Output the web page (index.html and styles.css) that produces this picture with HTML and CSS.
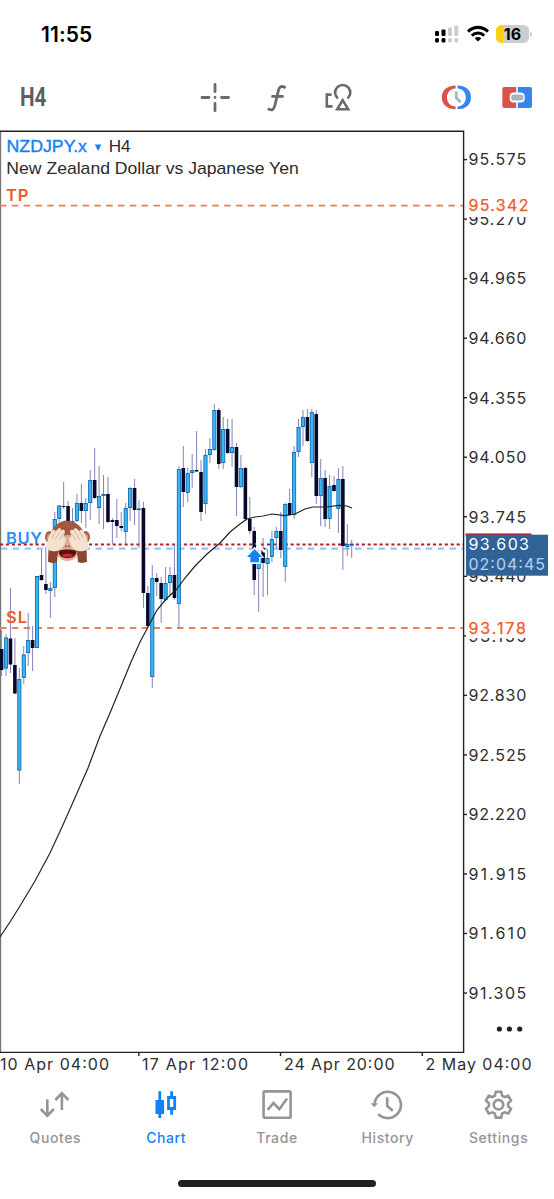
FILE: index.html
```
<!DOCTYPE html>
<html lang="en">
<head>
  <meta charset="UTF-8">
  <title>NZDJPY.x H4</title>
  <meta name="viewport" content="width=device-width, initial-scale=1.0">
  <link rel="stylesheet" href="styles.css">
</head>
<body>
  <header class="status-bar">
    <span class="clock">11:55</span>
    <div class="status-icons">
      <svg class="signal" width="24" height="18" viewBox="0 0 24 18">
        <g fill="#000">
          <rect x="0" y="6" width="4" height="5" rx="1"/>
          <rect x="6.5" y="4.5" width="4" height="6.5" rx="1"/>
          <rect x="0" y="13" width="4" height="4.5" rx="1.5"/>
          <rect x="6.5" y="13" width="4" height="4.5" rx="1.5"/>
        </g>
        <g fill="#ccc">
          <rect x="13" y="2.5" width="4" height="8.5" rx="1"/>
          <rect x="19.3" y="0.5" width="4" height="10.5" rx="1"/>
          <rect x="13" y="13" width="4" height="4.5" rx="1.5"/>
          <rect x="19.3" y="13" width="4" height="4.5" rx="1.5"/>
        </g>
      </svg>
      <svg class="wifi" width="22" height="18" viewBox="0 0 22 18">
        <g fill="none" stroke="#000" stroke-width="3.1">
          <path d="M1 6.6C6.8 1 15.2 1 21 6.6"/>
          <path d="M4.8 10.6C8.4 7.2 13.6 7.2 17.2 10.6"/>
        </g>
        <path d="M7.6 13.2C9.6 11.5 12.4 11.5 14.4 13.2L11 16.6Z"/>
      </svg>
      <div class="battery"><span>16</span></div>
    </div>
  </header>

  <div class="toolbar">
    <svg class="timeframe" width="30" height="32" viewBox="0 0 30 32">
      <text x="0" y="24.6" textLength="26.5" lengthAdjust="spacingAndGlyphs">H4</text>
    </svg>
    <div class="tools">
      <svg width="32" height="32" viewBox="0 0 32 32" class="line-icon">
        <path d="M16 3.5V10.7M16 22.5V29.7M3 16.5H10M22.5 16.5H29.5M16 16.5h0.01"/>
      </svg>
      <svg width="32" height="32" viewBox="0 0 32 32" class="line-icon">
        <path d="M23.7 6.3C20.5 4.6 18.3 5.6 17.4 9.5L14 24C13 28.2 11.3 29.8 7.8 28.3M11.5 15.4H21.5"/>
      </svg>
      <svg width="32" height="32" viewBox="0 0 32 32" class="line-icon square">
        <path d="M8.6 13.6H3.8V25.4H9.6"/>
        <path d="M14.8 17.4A7.6 7.6 0 1 1 24.6 17.4"/>
        <path d="M19.7 19.2L14.2 28.3H25.2Z"/>
      </svg>
    </div>
    <div class="trade-tools">
      <svg width="32" height="32" viewBox="0 0 32 32">
        <path fill="#d9544b" d="M15.6 4.6C7 4.6 1.8 9.6 1.8 16.4S7 28.2 15.6 28.2V25.4C10.4 25.2 7 21.4 7 16.4S10.4 7.6 15.6 7.4Z"/>
        <path fill="#3485f0" d="M17.6 4.6C26 4.6 31 9.6 31 16.4S26 28.2 17.6 28.2V25.4C22.4 25.2 25.8 21.4 25.8 16.4S22.4 7.6 17.6 7.4Z"/>
        <path fill="none" stroke="#a5b5bf" stroke-width="2.8" d="M16.3 10.6V17L20.6 21.3"/>
      </svg>
      <svg width="32" height="32" viewBox="0 0 32 32">
        <path fill="#d9544b" d="M15.2 6H3.3Q1.3 6 1.3 8V25Q1.3 27 3.3 27H15.2Z"/>
        <path fill="#3485f0" d="M16.8 6H29Q31 6 31 8V25Q31 27 29 27H16.8Z"/>
        <rect x="8.7" y="11.4" width="15" height="10" rx="4" fill="#fff"/>
        <rect x="10.2" y="13.4" width="12.2" height="6.1" rx="2.8" fill="#a5b5bf"/>
      </svg>
    </div>
  </div>

  <!-- chart, user units are screen pixels -->
  <svg class="chart" width="554" height="948" viewBox="0 130 554 948">
    <path d="M0.5 131V1052" stroke="#777" stroke-width="1.4"/>
    <path d="M0 131.2H463.6V1052.4H0" fill="none" stroke="#222" stroke-width="1.4"/>

    <g class="levels">
      <path d="M0 205.6H463" stroke="#f37a52" stroke-width="1.6" stroke-dasharray="6.5 5.3"/>
      <path d="M0 628H463" stroke="#ed7f5d" stroke-width="1.8" stroke-dasharray="6.5 5.3"/>
      <path d="M0 544.4H463" stroke="#b3202e" stroke-width="2" stroke-dasharray="3.2 2.73"/>
      <path d="M1 548.7H463" stroke="#93c6f7" stroke-width="2.3" stroke-dasharray="6.5 5.3"/>
    </g>

    <g id="candles"></g>
    <polyline class="ma" points="0,937 10,922 20,906 35,881 50,853 62,827 74,800 88,768 100,736 110,713 122,684 131,662 140,642 148,627 157,610 167,598 176,590 185,578 195,566 207,554 220,543 230,532 240,524 247,519 255,517 263,516 272,514 285,515.6 295,514 305,509 313,507 327,507 338,505.4 347,506 352,508"/>

    <!-- entry marker -->
    <path d="M256 543L265 552" stroke="#fff" stroke-width="2.5"/>
    <path d="M254.6 546.8L264.4 557.8H260.4V564H248.8V557.8H244.8Z" fill="#fff"/>
    <path d="M254.6 549L262.2 556.9H259V562.2H250.4V556.9H247Z" fill="#1482f5"/>

    <g class="level-name">
      <text x="6" y="201.3" textLength="22.5" class="stop">TP</text>
      <text x="6" y="544" textLength="36" class="buy">BUY</text>
      <text x="6" y="623.3" textLength="21" class="stop">SL</text>
    </g>

    <!-- monkey -->
    <g transform="translate(45 520)">
      <ellipse cx="4.4" cy="17" rx="4.4" ry="6" fill="#a7654b"/>
      <ellipse cx="40.6" cy="17" rx="4.4" ry="6" fill="#a7654b"/>
      <ellipse cx="4.3" cy="17.5" rx="2.3" ry="3.6" fill="#d79a80"/>
      <ellipse cx="40.7" cy="17.5" rx="2.3" ry="3.6" fill="#d79a80"/>
      <path d="M20.5 0.5C31 1 39 7 39.5 18C40 30 34 38 22.5 38S5 30 5.5 18C6 8 12 3 17 1.6Z" fill="#a1593f"/>
      <ellipse cx="22.5" cy="28" rx="12" ry="13" fill="#dcae97"/>
      <path d="M13.5 31C18 29 27 29 31.5 31C31 36.5 27 38.2 22.5 38.2S14 36.5 13.5 31Z" fill="#5b1010"/>
      <path d="M16.5 35C20 33 25 33 28.5 35C26 38.3 19 38.3 16.5 35Z" fill="#c5252f"/>
      <path d="M3.6 27L13.2 30L12 42Q7 44 3 41.8Z" fill="#8b4632"/>
      <path d="M41.4 27L31.8 30L33 42Q38 44 42 41.8Z" fill="#8b4632"/>
      <path id="hand" d="M2 28C1 22 4 15 7.5 10.5C9 9 10.7 10 10.3 11.5L13.5 8.6C15.3 7.5 16.6 8.5 16 10.2L18 9.8C19.8 9.8 20.2 11.5 19.5 13.5L18.4 17.5C20.2 16.6 21.6 18.2 20.8 20.3C19 26.5 16.5 30 11 31.2Q4 32 2 28Z" fill="#f3e2cd"/>
      <use href="#hand" transform="translate(45 0) scale(-1 1)"/>
      <path d="M6.8 18.5L10.2 11.7M10.3 19.5L16 10.2M14 20L18.8 13.4M38.2 18.5L34.8 11.7M34.7 19.5L29 10.2M31 20L26.2 13.4" fill="none" stroke="#cfab94" stroke-width="0.8"/>
      <path d="M20.7 25.5L21.5 27M24.3 25.5L23.5 27" stroke="#7a3a2b" stroke-width="1.4"/>
    </g>

    <g class="title">
      <text x="6.5" y="152" textLength="80.5" lengthAdjust="spacingAndGlyphs" class="symbol">NZDJPY.x</text>
      <path d="M94.8 144.4H101.4L98.1 151Z" fill="#1482f5"/>
      <text x="108.7" y="152" textLength="22" lengthAdjust="spacingAndGlyphs">H4</text>
      <text x="6.3" y="174" textLength="292.5" lengthAdjust="spacingAndGlyphs">New Zealand Dollar vs Japanese Yen</text>
    </g>

    <g id="priceAxis" class="axis"></g>
    <rect x="466" y="196" width="88" height="21" fill="#fff"/>
    <text class="axis order" x="468.5" y="211.3" textLength="60">95.342</text>
    <rect x="466" y="618" width="88" height="20" fill="#fff"/>
    <text class="axis order" x="468.5" y="633.6" textLength="57.5">93.178</text>

    <rect x="465.5" y="533.4" width="66" height="3" fill="#c8202e"/>
    <rect x="466" y="534.7" width="82" height="41" fill="#2f6397"/>
    <text class="axis now" x="468.5" y="550.4" textLength="60.5">93.603</text>
    <text class="axis timer" x="468.5" y="569.7" textLength="76.5">02:04:45</text>

    <g fill="#222">
      <circle cx="499.4" cy="1029" r="2.6"/>
      <circle cx="509.4" cy="1029" r="2.6"/>
      <circle cx="519.7" cy="1029" r="2.6"/>
    </g>

    <path d="M138.8 1052V1056M280.5 1052V1056M422.3 1052V1056" stroke="#222" stroke-width="1.4"/>
    <g class="axis">
      <text x="0" y="1070" textLength="109">10 Apr 04:00</text>
      <text x="142" y="1070" textLength="106">17 Apr 12:00</text>
      <text x="284" y="1070" textLength="110.5">24 Apr 20:00</text>
      <text x="425.5" y="1070" textLength="106">2 May 04:00</text>
    </g>
  </svg>

  <nav class="tabs">
    <a class="tab">
      <svg width="32" height="32" viewBox="0 0 32 32"><path d="M8.3 10.3V27M1.8 20L8.3 26.8L14.8 20M22.9 21V4.2M16.4 11L22.9 4.2L29.4 11"/></svg>
      <span>Quotes</span>
    </a>
    <a class="tab active">
      <svg width="32" height="32" viewBox="0 0 32 32">
        <path class="solid" d="M8.4 2.3H11.2V11H14.1V25H11.2V29H8.4V25H5.5V11H8.4Z"/>
        <path class="solid" fill-rule="evenodd" d="M20.2 2.3H23V7H26.1V21H23V25.7H20.2V21H17.1V7H20.2ZM19.9 10V18H23.3V10Z"/>
      </svg>
      <span>Chart</span>
    </a>
    <a class="tab">
      <svg width="32" height="32" viewBox="0 0 32 32"><rect x="2.6" y="2.4" width="27" height="26.4" rx="1.5"/><path d="M6.7 20.8L12.5 14L18.3 20.2L26 9.6"/></svg>
      <span>Trade</span>
    </a>
    <a class="tab">
      <svg width="32" height="32" viewBox="0 0 32 32">
        <path d="M2.6 14.5A13.2 13.2 0 1 1 6.3 25.2M15.2 8.3V17L20.8 21.8"/>
        <path class="solid" d="M-1.5 14.3H6L2.3 18.3Z"/>
      </svg>
      <span>History</span>
    </a>
    <a class="tab">
      <svg width="32" height="32" viewBox="0 0 32 32">
        <g transform="translate(15.5 15.7)">
          <path d="M-3.6 -9L-2.7 -12.9H2.7L3.6 -9L6 -7.6L9.8 -8.8L12.5 -4.1L9.6 -1.4V1.4L12.5 4.1L9.8 8.8L6 7.6L3.6 9L2.7 12.9H-2.7L-3.6 9L-6 7.6L-9.8 8.8L-12.5 4.1L-9.6 1.4V-1.4L-12.5 -4.1L-9.8 -8.8L-6 -7.6Z"/>
          <circle r="4.8"/>
        </g>
      </svg>
      <span>Settings</span>
    </a>
  </nav>
  <div class="home-indicator"></div>

  <script>
    const svgNS = "http://www.w3.org/2000/svg";

    function add(parent, tag, attrs, text) {
      const el = document.createElementNS(svgNS, tag);
      for (let key in attrs) el.setAttribute(key, attrs[key]);
      if (text) el.textContent = text;
      parent.appendChild(el);
    }

    // direction (1 up, 0 down), high, body top, body bottom, low
    const candles = [
      [0,630,649,670,676], [1,634,637.5,668.5,676], [0,588,638.5,664.5,673], [0,638,665,693.5,694],
      [1,668,679,770.5,784], [1,646,654.5,678,684], [1,613,640,653,666], [0,626,640,648,671],
      [1,576,576,648,648], [0,550,575,580,581], [0,547,584,590,594], [1,582,588,591,618],
      [1,512,519,588,597], [1,505,505.5,519,522], [0,482,506,507,509], [0,501,506,525,530],
      [1,508,521,523,525], [1,494,503,521,522], [0,484,503,511,523], [1,498,503,511,528],
      [1,470,480,503,520], [0,448,480,498,499], [1,466,496,508,524], [1,475,494,496,529],
      [0,477,494,522,523], [0,518,520,522,544], [0,499,520,526,538], [0,512,526,528,531],
      [1,503,508,532,544], [1,487,488,508,521], [0,479,488,510,525], [1,500,508.5,510,548],
      [0,502,508,593,608], [0,586,593,626,627], [1,565,578,677,688], [0,573,578,582,596],
      [0,577,583,599,623], [1,567,583,600,601], [1,567,575,583,595], [0,544,575,598,600],
      [1,466,469,604,628], [0,446,468,492,507], [1,468,473,493,502], [1,454,470,473,488],
      [0,431,470,471.5,472], [0,460,472,512,521], [1,449,455,504,514], [1,438,449,455,463],
      [1,404,410,450,451], [0,408,410,464,469], [1,417,429,463,469], [0,419,429,453,454],
      [1,419,447,453,467], [0,443,447,487,516], [1,455,468,487,488], [0,467,468,519,521],
      [0,497,519,531,534], [0,527,531,580,595], [1,550,558,569,612], [0,538,548,563,597],
      [1,549,558,564,595], [1,531,539,557,562], [1,527,531,538,548], [0,512,531,550,558],
      [1,503,504,567,582], [0,489,503,515,516], [1,446,452,515,519], [1,419,427,452,457],
      [1,410,417,427,446], [0,409,417,441,442], [1,409,412,463,477], [0,410,414,496,504],
      [1,459,478,496,526], [0,470,478,519,527], [1,475,486,519,529], [0,476,485,491,492],
      [1,468,479,509,533], [0,466,479,546,570], [1,524,544,547,556], [1,540,544,545,558]
    ];

    const group = document.getElementById("candles");
    candles.forEach(([up, high, top, bottom, low], i) => {
      const x = 1.6 + i * 4.432;
      add(group, "line", { class: "wick", x1: x, x2: x, y1: high, y2: low });
      if (up) {
        add(group, "rect", { class: "up", x: x - 1.6, y: top + 0.4, width: 3.2, height: Math.max(bottom - top - 0.8, 0.6) });
      } else {
        add(group, "rect", { class: "down", x: x - 1.8, y: top, width: 3.6, height: bottom - top });
      }
    });

    // price grid labels
    const axis = document.getElementById("priceAxis");
    for (let i = 0; i < 15; i++) {
      const y = 159.6 + i * 59.53;
      add(axis, "path", { d: `M463.6 ${y}H467`, stroke: "#222", "stroke-width": 1.4 });
      add(axis, "text", { x: 468.5, y: y + 5.8, textLength: 57.8 }, (95.575 - i * 0.305).toFixed(3));
    }
  </script>
</body>
</html>
```
FILE: styles.css
```
body {
  margin: 0;
  width: 554px;
  height: 1199px;
  background: #fff;
  color: #222;
  font-family: Inter, "Liberation Sans", sans-serif;
  overflow: hidden;
  display: flex;
  flex-direction: column;
}
svg {
  display: block;
  flex: none;
}
.status-bar {
  height: 68px;
  box-sizing: border-box;
  padding: 0 21px 0 41px;
  display: flex;
  align-items: center;
  justify-content: space-between;
}
.clock {
  font-size: 21px;
  font-weight: 600;
  letter-spacing: 0.1px;
  color: #000;
}
.status-icons {
  display: flex;
  align-items: center;
}
.wifi {
  margin: 0 7.5px 0 8px;
}
.battery {
  position: relative;
  width: 33px;
  height: 18px;
  border-radius: 5.5px;
  background: linear-gradient(90deg, #fcd00a 7px, #cdcdcd 7px);
  color: #000;
  font-size: 16px;
  font-weight: 700;
  line-height: 18px;
  text-align: center;
  margin-right: 4px;
}
.battery::after {
  content: "";
  position: absolute;
  left: 34px;
  top: 6.5px;
  width: 2px;
  height: 5px;
  border-radius: 0 2px 2px 0;
  background: #ccc;
}
.toolbar {
  height: 62px;
  box-sizing: border-box;
  padding: 13px 21px 0 20px;
  display: flex;
  align-items: flex-start;
}
.timeframe text {
  font-family: Roboto, sans-serif;
  font-size: 25px;
  font-weight: 700;
  fill: #5f5f5f;
}
.tools {
  display: flex;
  gap: 30px;
  margin-left: 149px;
}
.line-icon {
  fill: none;
  stroke: #6a6a6a;
  stroke-width: 2.8;
  stroke-linecap: round;
}
.line-icon.square {
  stroke-linecap: butt;
  stroke-width: 2.6;
}
.trade-tools {
  display: flex;
  gap: 29px;
  margin-left: auto;
}
.wick {
  stroke: #7773b6;
  stroke-width: 0.9;
}
.up {
  fill: #35b8f8;
  stroke: #0a5fa8;
  stroke-width: 0.8;
}
.down {
  fill: #050a2c;
}
.ma {
  fill: none;
  stroke: #222;
  stroke-width: 1.2;
}
.level-name {
  font-size: 16.5px;
  font-weight: 600;
}
.level-name .stop {
  fill: #ee5a2b;
}
.level-name .buy {
  fill: #2a8df2;
}
.title {
  font-family: "Liberation Sans", sans-serif;
  font-size: 17px;
  fill: #2b2b2b;
}
.title .symbol {
  fill: #1482f5;
  stroke: #1482f5;
  stroke-width: 0.4;
}
.axis {
  font-size: 16px;
  fill: #2e2e2e;
}
.axis.order {
  fill: #f0592a;
  stroke: #f0592a;
  stroke-width: 0.25;
}
.axis.now {
  fill: #fff;
}
.axis.timer {
  fill: #b5d3f0;
}
.tabs {
  display: grid;
  grid-template-columns: repeat(5, 1fr);
  padding-top: 11px;
}
.tab {
  display: flex;
  flex-direction: column;
  align-items: center;
  color: #959595;
  font-size: 14px;
  font-weight: 500;
  letter-spacing: 0.6px;
  line-height: 18px;
}
.tab svg {
  fill: none;
  stroke: currentColor;
  stroke-width: 2.6;
  margin-bottom: 8px;
  overflow: visible;
}
.tab .solid {
  fill: currentColor;
  stroke: none;
}
.tab.active {
  color: #1482f5;
}
.home-indicator {
  width: 198px;
  height: 7px;
  margin: 33px auto 0;
  border-radius: 4px;
  background: #222;
}
```
